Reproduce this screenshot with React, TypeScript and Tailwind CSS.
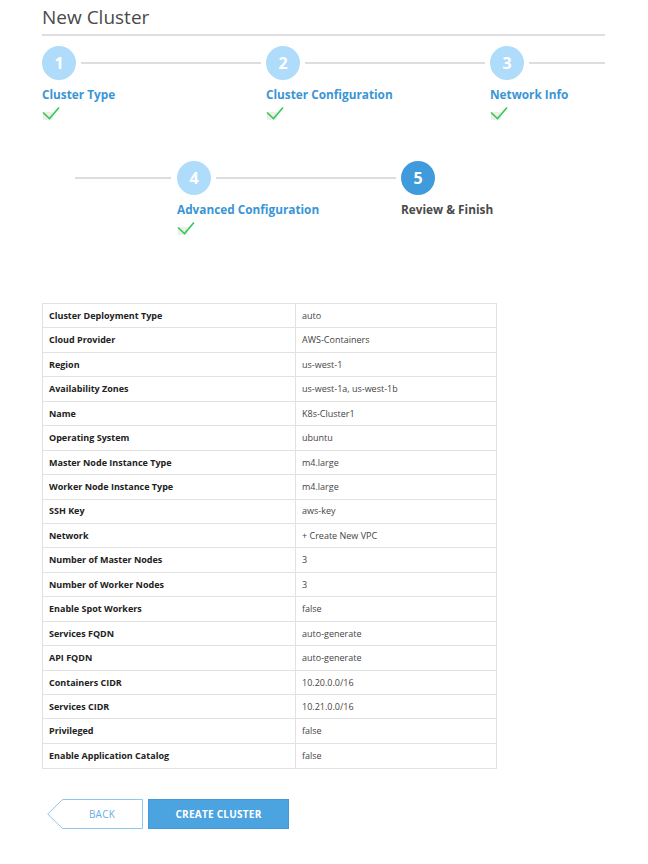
import React from "react";

interface Step {
  num: number;
  label: string;
  done?: boolean;
  active?: boolean;
}

const ROWS: [string, string][] = [
  ["Cluster Deployment Type", "auto"],
  ["Cloud Provider", "AWS-Containers"],
  ["Region", "us-west-1"],
  ["Availability Zones", "us-west-1a, us-west-1b"],
  ["Name", "K8s-Cluster1"],
  ["Operating System", "ubuntu"],
  ["Master Node Instance Type", "m4.large"],
  ["Worker Node Instance Type", "m4.large"],
  ["SSH Key", "aws-key"],
  ["Network", "+ Create New VPC"],
  ["Number of Master Nodes", "3"],
  ["Number of Worker Nodes", "3"],
  ["Enable Spot Workers", "false"],
  ["Services FQDN", "auto-generate"],
  ["API FQDN", "auto-generate"],
  ["Containers CIDR", "10.20.0.0/16"],
  ["Services CIDR", "10.21.0.0/16"],
  ["Privileged", "false"],
  ["Enable Application Catalog", "false"],
];

function Check() {
  return (
    <div className="relative w-[18px] h-[14px]">
      <div className="absolute left-[1px] bottom-0 w-[10px] h-[8px] bg-[#eeeeee]" />
      <svg className="absolute inset-0" width="18" height="14" viewBox="0 0 18 14" fill="none">
        <path d="M1 6.5 L7.5 12.5 L17 1.5" stroke="#2fcc4f" strokeWidth="1.6" />
      </svg>
    </div>
  );
}

function StepItem({
  step,
  line,
  width,
  lineEnd = false,
}: {
  step: Step;
  line: boolean;
  width: string;
  lineEnd?: boolean;
}) {
  return (
    <div className={`${width} shrink-0`}>
      <div className="flex items-center">
        <div
          className={`w-[34px] h-[34px] rounded-full flex items-center justify-center text-white text-[16px] font-bold shrink-0 ${
            step.active ? "bg-[#3f9bdc]" : "bg-[#afdcfb]"
          }`}
        >
          {step.num}
        </div>
        {line && (
          <div className={`flex-1 h-[2px] bg-[#dddddd] ml-[5px] ${lineEnd ? "mr-0" : "mr-[5px]"}`} />
        )}
      </div>
      <div
        className={`mt-[6px] text-[11.8px] leading-[16px] font-bold ${
          step.active ? "text-[#4a4a4a]" : "text-[#3a95d6]"
        }`}
      >
        {step.label}
      </div>
      {step.done && (
        <div className="mt-[4px]">
          <Check />
        </div>
      )}
    </div>
  );
}

export default function App() {
  return (
    <div className="min-h-[864px] bg-white font-['Open_Sans',sans-serif]">
      <div className="pl-[42px] w-[605px]">
        {/* Header */}
        <div className="h-[36px] border-b-2 border-[#dedede] text-[19px] leading-[34px] text-[#4a4a4a]">
          New Cluster
        </div>

        {/* Stepper row 1 */}
        <div className="flex mt-[10px]">
          <StepItem step={{ num: 1, label: "Cluster Type", done: true }} line width="w-[224px]" />
          <StepItem step={{ num: 2, label: "Cluster Configuration", done: true }} line width="w-[224px]" />
          <StepItem step={{ num: 3, label: "Network Info", done: true }} line lineEnd width="flex-1" />
        </div>

        {/* Stepper row 2 */}
        <div className="flex mt-[41px]">
          <div className="w-[135px] h-[34px] flex items-center shrink-0">
            <div className="ml-[33px] w-[96px] h-[2px] bg-[#dddddd]" />
          </div>
          <StepItem step={{ num: 4, label: "Advanced Configuration", done: true }} line width="w-[224px]" />
          <StepItem step={{ num: 5, label: "Review & Finish", active: true }} line={false} width="w-[120px]" />
        </div>

        {/* Summary table */}
        <div className="mt-[68px] w-[455px] border border-[#e2e2e2]">
          {ROWS.map(([k, v], i) => (
            <div
              key={k}
              className={`flex h-[24.44px] text-[9px] ${i < ROWS.length - 1 ? "border-b border-[#e2e2e2]" : ""}`}
            >
              <div className="w-[253px] pl-[6px] flex items-center font-bold text-[#222222] border-r border-[#e2e2e2]">
                {k}
              </div>
              <div className="flex-1 pl-[6px] flex items-center text-[#444444]">{v}</div>
            </div>
          ))}
        </div>

        {/* Actions */}
        <div className="flex mt-[30px] ml-[5px] gap-[5px]">
          <button className="relative w-[96px] h-[30px] text-[10px] text-[#6aaee0] tracking-wide">
            <svg className="absolute inset-0" width="96" height="30" viewBox="0 0 96 30" fill="none">
              <path d="M15.5 0.5 H95.5 V29.5 H15.5 L0.7 15 Z" stroke="#8fc6ee" strokeWidth="1" fill="white" />
            </svg>
            <span className="relative pl-[14px]">BACK</span>
          </button>
          <button className="w-[141px] h-[30px] bg-[#4ba3df] border border-[#4299d6] text-white text-[10px] font-bold tracking-wide">
            CREATE CLUSTER
          </button>
        </div>
      </div>
    </div>
  );
}
